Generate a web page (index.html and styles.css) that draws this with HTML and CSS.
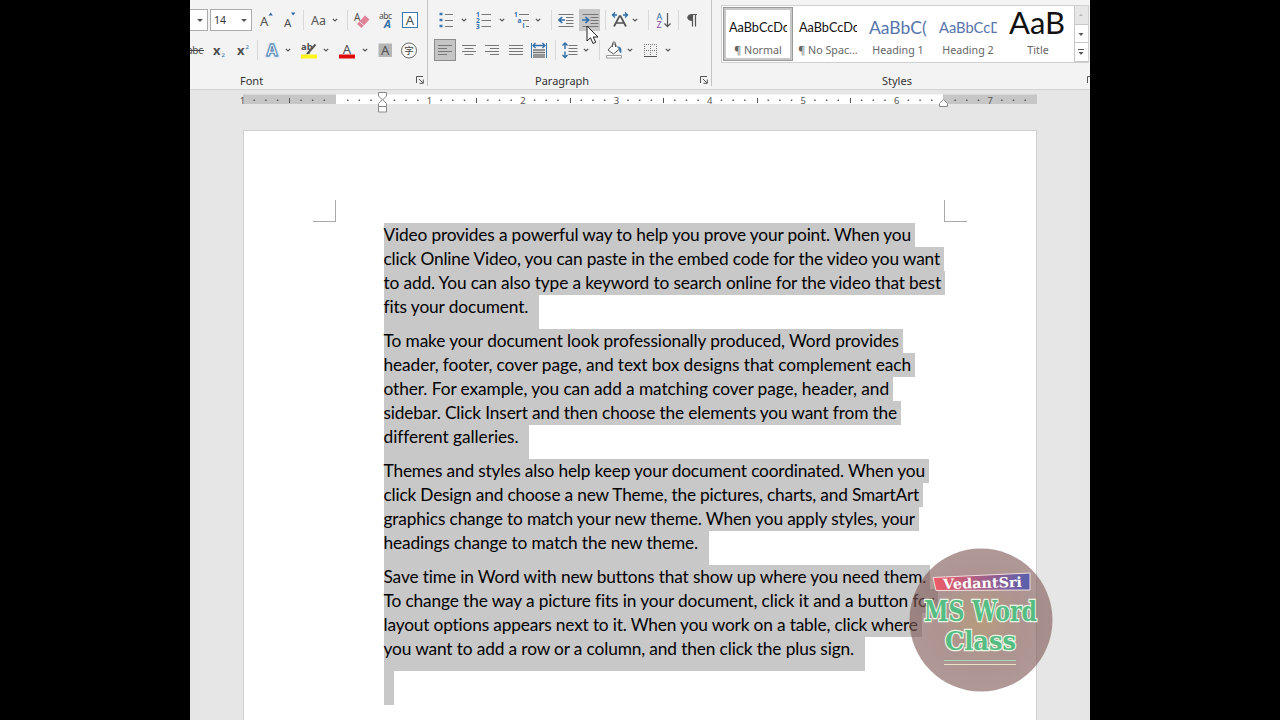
FILE: index.html
```
<!DOCTYPE html>
<html lang="en">
<head>
  <meta charset="UTF-8" />
  <meta name="viewport" content="width=device-width, initial-scale=1.0"/>
  <title>MS Word Class</title>
  <link rel="stylesheet" href="styles.css">
</head>
<body>

  <!-- shared symbols -->
  <svg class="defs">
    <symbol id="chev" viewBox="0 0 8 8"><path d="M1.8 2.8 4 5l2.200-2.200" fill="none" stroke="#555" stroke-width="1.200"/></symbol>
    <symbol id="launch" viewBox="0 0 8 8"><path d="M.5 7V.5H7M3 3l4 4M7.300 3.500v3.800H3.500" fill="none" stroke="#555"/></symbol>
  </svg>

  <div class="app">
    <div class="ribbon">

      <div class="group font-group">
        <div class="row font-row1">
          <div class="box"><i class="arrow"></i></div>
          <div class="box size">14<i class="arrow"></i></div>
          <svg class="icon" viewBox="0 0 24 24"><text x="4" y="18" class="glyph" font-size="13">A</text><path d="m12.500 7.500 2.200-3 2.200 3z" fill="#2f6da8"/></svg>
          <svg class="icon" viewBox="0 0 24 24"><text x="5" y="18.500" class="glyph" font-size="11.500">A</text><path d="m12 4.500 2.200 3 2.200-3z" fill="#2f6da8"/></svg>
          <i class="sep"></i>
          <span class="case">Aa</span>
          <svg class="chev"><use href="#chev"/></svg>
          <i class="sep"></i>
          <svg class="icon" viewBox="0 0 24 24"><text x="3" y="13" class="glyph" font-size="10">A</text><path d="m6 16 8-8.500 4.500 4-8 8.500z" fill="#e28299"/><path d="m8.500 13.500 4.500 4" stroke="#f3e3e8"/></svg>
          <svg class="icon" viewBox="0 0 24 24"><text x="5" y="10.500" class="glyph" font-size="8.500" textLength="13">abc</text><text x="10" y="20" font-size="11" font-weight="bold" font-style="italic" fill="#2f6da8">A</text></svg>
          <svg class="icon" viewBox="0 0 24 24"><rect x="4.500" y="4.500" width="15" height="15" fill="#fff" stroke="#3c78ad"/><text x="12" y="17" text-anchor="middle" class="glyph" font-size="13">A</text></svg>
        </div>
        <div class="row font-row2">
          <svg class="icon" viewBox="0 0 24 24"><text x="3" y="16" class="glyph" font-size="10" textLength="16">abc</text><path d="M2 12.500h18" stroke="#444"/></svg>
          <svg class="icon" viewBox="0 0 24 24"><text x="6" y="17" class="glyph" font-size="13" font-weight="bold">x</text><text x="14.500" y="18.500" font-size="6" fill="#2f6da8">2</text></svg>
          <svg class="icon" viewBox="0 0 24 24"><text x="6" y="17" class="glyph" font-size="13" font-weight="bold">x</text><text x="14.500" y="11" font-size="6" fill="#2f6da8">2</text></svg>
          <i class="sep"></i>
          <svg class="icon" viewBox="0 0 24 24"><text x="12" y="18" text-anchor="middle" font-size="16" font-weight="bold" fill="#fff" stroke="#c2d9ef" stroke-width="2.500">A</text><text x="12" y="18" text-anchor="middle" font-size="16" font-weight="bold" fill="#fff" stroke="#4478ab" stroke-width=".9">A</text></svg>
          <svg class="chev"><use href="#chev"/></svg>
          <svg class="icon" viewBox="0 0 24 24"><text x="4" y="12" class="glyph" font-size="9.500" font-weight="bold">ab</text><path d="M11 15 18.500 6.500" stroke="#555" stroke-width="2"/><path d="m8.500 16.500 3-3 1.500 2z" fill="#444"/><path d="M4 16.500h16v4H4z" fill="#fdf51c"/></svg>
          <svg class="chev"><use href="#chev"/></svg>
          <svg class="icon" viewBox="0 0 24 24"><text x="12" y="15.500" text-anchor="middle" class="glyph" font-size="13">A</text><path d="M4 16.500h16v4H4z" fill="#de0b0b"/></svg>
          <svg class="chev"><use href="#chev"/></svg>
          <svg class="icon" viewBox="0 0 24 24"><path d="M5.500 5.500h13.500v13.500H5.500z" fill="#b5b5b5"/><text x="12.200" y="17" text-anchor="middle" class="glyph" font-size="13">A</text></svg>
          <svg class="icon" viewBox="0 0 24 24"><circle cx="12" cy="12.500" r="7.500" fill="#fafafa" stroke="#666"/><text x="12" y="16" text-anchor="middle" class="cjk" font-size="9.500">字</text></svg>
        </div>
        <div class="label"><span class="font-label">Font</span><svg class="launch"><use href="#launch"/></svg></div>
      </div>

      <div class="group para-group">
        <div class="row para-row1">
          <svg class="icon" viewBox="0 0 24 24"><path d="M5.500 6h3M5.500 12h3M5.500 18h3" stroke="#3c78ad" stroke-width="2.600"/><path d="M11 6.500h8M11 12.500h8M11 18.500h8" stroke="#777"/></svg>
          <svg class="chev"><use href="#chev"/></svg>
          <svg class="icon" viewBox="0 0 24 24"><g font-size="6.500" font-weight="bold" fill="#2f6da8"><text x="4" y="8.500">1</text><text x="4" y="14.500">2</text><text x="4" y="20.500">3</text></g><path d="M9.500 6.500h9.500M9.500 12.500h9.500M9.500 18.500h9.500" stroke="#777"/></svg>
          <svg class="chev"><use href="#chev"/></svg>
          <svg class="icon" viewBox="0 0 24 24"><g font-size="6.500" font-weight="bold" fill="#2f6da8"><text x="4" y="8.500">1</text><text x="7.500" y="14.500">a</text><text x="12.500" y="20">i</text></g><path d="M9 6.500h10M13 12.500h6M16 18.500h3" stroke="#777"/></svg>
          <svg class="chev"><use href="#chev"/></svg>
          <i class="sep"></i>
          <svg class="icon" viewBox="0 0 24 24"><path d="M4.500 6.500h15M12 9.500h7.500M12 12.500h7.500M12 15.500h7.500M4.500 18.500h15" stroke="#777"/><path d="M11 12H5.500M8.200 9 5 12l3.200 3" fill="none" stroke="#2f6da8" stroke-width="1.700"/></svg>
          <svg class="icon hover" viewBox="0 0 24 24"><path d="M4.500 6.500h16M12.500 9.500h8M12.500 12.500h8M12.500 15.500h8M4.500 18.500h16" stroke="#777"/><path d="M4 12h6M7.500 9l3.200 3-3.200 3" fill="none" stroke="#2f6da8" stroke-width="1.700"/></svg>
          <i class="sep"></i>
          <svg class="icon" viewBox="0 0 24 24"><path d="M6 18.500 11.500 8h1l5.500 10.500M8 15h8" fill="none" stroke="#505050" stroke-width="1.700"/><path d="M9 7H5M7 4.500 4.500 7 7 9.500M15 7h4M17 4.500 19.500 7 17 9.500" fill="none" stroke="#2f6da8" stroke-width="1.300"/></svg>
          <svg class="chev"><use href="#chev"/></svg>
          <i class="sep"></i>
          <svg class="icon" viewBox="0 0 24 24"><text x="4.500" y="11.500" font-size="9" fill="#2f6da8">A</text><text x="4.500" y="20" font-size="9" fill="#8a4ba0">Z</text><path d="M15.500 5v13.500M12.500 15.500l3 3.200 3-3.200" fill="none" stroke="#555" stroke-width="1.200"/></svg>
          <i class="sep"></i>
          <svg class="icon" viewBox="0 0 24 24"><path d="M12.500 7v11.500M15.500 7v11.500M11 6.500h6" stroke="#555" stroke-width="1.200"/><path d="M12.500 6v7C5.500 13 5.500 6 12.500 6z" fill="#555"/></svg>
        </div>
        <div class="row para-row2">
          <svg class="icon active" viewBox="0 0 24 24"><path d="M5 7.500h14M5 10.500h9M5 13.500h14M5 16.500h9" stroke="#777"/></svg>
          <svg class="icon" viewBox="0 0 24 24"><path d="M5 7.500h14M7.500 10.500h9M5 13.500h14M7.500 16.500h9" stroke="#777"/></svg>
          <svg class="icon" viewBox="0 0 24 24"><path d="M5 7.500h14M10 10.500h9M5 13.500h14M10 16.500h9" stroke="#777"/></svg>
          <svg class="icon" viewBox="0 0 24 24"><path d="M5 7.500h14M5 10.500h14M5 13.500h14M5 16.500h14" stroke="#777"/></svg>
          <svg class="icon" viewBox="0 0 24 24"><path d="M4.500 5v15M19.500 5v15" stroke="#3c78ad"/><path d="M6 7.500h12M8.500 5 6 7.500 8.500 10M15.500 5 18 7.500 15.500 10" fill="none" stroke="#2f6da8" stroke-width="1.300"/><path d="M6 12h12M6 14.500h12M6 17h12M6 19h12" stroke="#777" stroke-width="1.300"/></svg>
          <i class="sep"></i>
          <svg class="icon" viewBox="0 0 24 24"><path d="M10.500 7.500h9M10.500 10.500h9M10.500 13.500h9M10.500 16.500h9" stroke="#777"/><path d="M7 5v6M4.500 7.500 7 5l2.500 2.500M7 13.500V19M4.500 17 7 19.500 9.500 17" fill="none" stroke="#2f6da8" stroke-width="1.400"/></svg>
          <svg class="chev"><use href="#chev"/></svg>
          <i class="sep"></i>
          <svg class="icon" viewBox="0 0 24 24"><path d="m6 12 6-6.500 5.500 5.500-6 5z" fill="#fff" stroke="#555"/><path d="M10.500 9V5.500c0-2 3-2 3 0V9" fill="none" stroke="#555"/><path d="M16 8.500c4 0 4 4 3 7-1.500-1-2-3-2-4.500z" fill="#3c78ad"/><path d="M4.500 17.500h15v2.500h-15z" fill="#fff" stroke="#999"/></svg>
          <svg class="chev"><use href="#chev"/></svg>
          <svg class="icon" viewBox="0 0 24 24"><path d="M6 6.500h12.500v12M6.500 6v12M12.500 6v12M6 12.500h12" fill="none" stroke="#777" stroke-dasharray="1 1"/><path d="M6 18.500h13" stroke="#555"/></svg>
          <svg class="chev"><use href="#chev"/></svg>
        </div>
        <div class="label"><span class="para-label">Paragraph</span><svg class="launch"><use href="#launch"/></svg></div>
      </div>

      <div class="group styles-group">
        <div class="gallery">
          <div class="style selected"><div class="sample">AaBbCcDc</div><div class="name">¶ Normal</div></div>
          <div class="style"><div class="sample">AaBbCcDc</div><div class="name">¶ No Spac...</div></div>
          <div class="style"><div class="sample h1">AaBbC(</div><div class="name">Heading 1</div></div>
          <div class="style"><div class="sample h2">AaBbCcD</div><div class="name">Heading 2</div></div>
          <div class="style"><div class="sample title">AaB</div><div class="name">Title</div></div>
          <div class="scroller">
            <span class="off"><svg viewBox="0 0 12 18"><path d="m4 10 2-2.500L8 10z" fill="#bbb"/></svg></span>
            <span><svg viewBox="0 0 12 18"><path d="m3.500 8 2.500 3 2.500-3z" fill="#555"/></svg></span>
            <span><svg viewBox="0 0 12 18"><path d="M3 6.500h6" stroke="#555"/><path d="m3.500 9 2.500 3 2.500-3z" fill="#555"/></svg></span>
          </div>
        </div>
        <div class="label"><span class="styles-label">Styles</span><svg class="launch"><use href="#launch"/></svg></div>
      </div>
    </div>

    <svg class="ruler" viewBox="190 90 900 40">
      <rect x="243" y="94.500" width="93" height="9.500" fill="#c6c6c6"/>
      <rect x="336" y="94.500" width="607" height="9.500" fill="#fff"/>
      <rect x="943" y="94.500" width="94" height="9.500" fill="#c6c6c6"/>
      <g id="ticks"></g>
      <g fill="#fff" stroke="#888">
        <path d="M378.500 92.500h8v3.500l-4 4-4-4z"/>
        <path d="m382.500 99.500 4 4v3h-8v-3z"/>
        <path d="M378.500 106.500h8v5.500h-8z"/>
        <path d="m943.500 99.500 4 4v3h-8v-3z"/>
      </g>
    </svg>

    <div class="page">
      <div class="marks"><i class="mark left"></i><i class="mark right"></i></div>
      <div class="text">
        <p>
          <span data-w="527.500">Video provides a powerful way to help you prove your point. When you</span>
          <span data-w="556.500">click Online Video, you can paste in the embed code for the video you want</span>
          <span data-w="557.500">to add. You can also type a keyword to search online for the video that best</span>
          <span data-w="144.500">fits your document.</span>
        </p>
        <p>
          <span data-w="515.500">To make your document look professionally produced, Word provides</span>
          <span data-w="527.500">header, footer, cover page, and text box designs that complement each</span>
          <span data-w="505.500">other. For example, you can add a matching cover page, header, and</span>
          <span data-w="513.500">sidebar. Click Insert and then choose the elements you want from the</span>
          <span data-w="134.500">different galleries.</span>
        </p>
        <p>
          <span data-w="541.500">Themes and styles also help keep your document coordinated. When you</span>
          <span data-w="535.500">click Design and choose a new Theme, the pictures, charts, and SmartArt</span>
          <span data-w="531.500">graphics change to match your new theme. When you apply styles, your</span>
          <span data-w="314.500">headings change to match the new theme.</span>
        </p>
        <p>
          <span data-w="542.500">Save time in Word with new buttons that show up where you need them.</span>
          <span data-w="549.500">To change the way a picture fits in your document, click it and a button for</span>
          <span data-w="534.500">layout options appears next to it. When you work on a table, click where</span>
          <span data-w="470.500">you want to add a row or a column, and then click the plus sign.</span>
        </p>
        <p><span></span></p>
      </div>
    </div>

    <svg class="watermark" viewBox="0 0 144 144">
      <defs>
        <radialGradient id="disc"><stop offset="0" stop-color="#966d42" stop-opacity=".68"/><stop offset=".6" stop-color="#805a56" stop-opacity=".65"/><stop offset="1" stop-color="#7f5956" stop-opacity=".62"/></radialGradient>
        <linearGradient id="banner"><stop offset="0" stop-color="#ef5b66"/><stop offset=".5" stop-color="#a65f88"/><stop offset="1" stop-color="#5560ae"/></linearGradient>
      </defs>
      <circle cx="72" cy="72" r="71.500" fill="url(#disc)"/>
      <path d="M24 29.500 121 25v17l-94 .5z" fill="url(#banner)" stroke="#f3dfe0"/>
      <text x="34" y="40" class="brand" font-size="14" textLength="79" lengthAdjust="spacingAndGlyphs" transform="rotate(-1.500 72 36)">VedantSri</text>
      <text x="15" y="73" class="course" font-size="27" textLength="113" lengthAdjust="spacingAndGlyphs">MS Word</text>
      <text x="36" y="101.500" class="course" font-size="26" textLength="71" lengthAdjust="spacingAndGlyphs">Class</text>
      <path d="M35 112.500h72" stroke="#a5d6b5"/><path d="M35 116.500h72" stroke="#eee0c4"/>
    </svg>

    <svg class="cursor" viewBox="0 0 13 20"><path d="M1 1v15l3.500-3.200L7 18.500l2.700-1.200-2.500-5.300H12z" fill="#fff" stroke="#222"/></svg>
  </div>

  <script>
    // ruler: eighth-inch marks, zero at the left margin
    const INCH = 93.45;
    const ZERO = 336;
    let ticks = '';
    for (let i = -8; i < 60; i++) {
      const x = ZERO + i * INCH / 8;
      if (i === 0 || i === 4 || i === 52) continue;
      if (i % 8 === 0) {
        ticks += `<text x="${x}" y="103.500" text-anchor="middle">${Math.abs(i / 8)}</text>`;
      } else if (i % 4 === 0) {
        ticks += `<rect x="${Math.round(x)}" y="98" width="1" height="5"/>`;
      } else {
        ticks += `<rect x="${x - 0.7}" y="99.500" width="1.400" height="1.500"/>`;
      }
    }
    document.getElementById('ticks').innerHTML = ticks;

    // justify every line to its measured width
    document.querySelectorAll('.text span[data-w]').forEach(line => {
      const range = document.createRange();
      range.selectNodeContents(line);
      const diff = line.dataset.w - range.getBoundingClientRect().width;
      line.style.letterSpacing = diff / line.textContent.length + 'px';
    });
  </script>

</body>
</html>
```
FILE: styles.css
```
* {
  box-sizing: border-box;
}

body {
  margin: 0;
  background: #000;
  font-family: "Noto Sans", "Open Sans", sans-serif;
  overflow: hidden;
}

.defs {
  display: none;
}

.app {
  position: relative;
  width: 900px;
  height: 720px;
  margin: 0 auto;
  background: #e6e6e6;
  overflow: hidden;
}

/* ribbon */
.ribbon {
  display: flex;
  height: 90px;
  background: #f3f3f3;
  border-bottom: 1px solid #d2d2d2;
}

.group {
  display: flex;
  flex-direction: column;
  height: 86px;
  padding-top: 5px;
}

.font-group {
  width: 238px;
}

.para-group {
  width: 284px;
}

.styles-group {
  width: 378px;
  padding-left: 9px;
}

.font-group,
.para-group {
  border-right: 1px solid #c4c4c4;
}

.row {
  display: flex;
  align-items: center;
  height: 30px;
}

.icon {
  width: 24px;
  height: 24px;
  flex: none;
  overflow: visible;
}

.glyph {
  fill: #505050;
}

.cjk {
  font-family: "Noto Sans CJK SC", sans-serif;
  fill: #444;
}

.chev {
  width: 8px;
  height: 8px;
  flex: none;
}

.sep {
  width: 1px;
  height: 20px;
  flex: none;
  background: #d8d8d8;
}

.hover {
  background: linear-gradient(#c8c8c8, #c8c8c8) center / 21px 22px no-repeat;
}

.active {
  background: linear-gradient(#c5c5c5, #c5c5c5) center / 20px 20px no-repeat, linear-gradient(#8c8c8c, #8c8c8c) center / 22px 22px no-repeat;
}

.box {
  display: flex;
  align-items: center;
  justify-content: flex-end;
  width: 18px;
  height: 22px;
  flex: none;
  padding-right: 4px;
  background: #fff;
  border: 1px solid #ababab;
  border-left: 0;
}

.box.size {
  width: 42px;
  margin-left: 2px;
  padding-left: 3px;
  justify-content: space-between;
  border-left: 1px solid #ababab;
  font-size: 10.500px;
  color: #333;
}

.arrow {
  border: 3px solid transparent;
  border-top-color: #555;
  border-bottom: 0;
}

.case {
  width: 18px;
  font-size: 12.500px;
  color: #555;
}

/* spacing of the tool rows */
.font-row1 .icon:nth-child(3) { margin-left: 4px; }
.font-row1 .icon:nth-child(4) { margin-left: -1px; }
.font-row1 .case { margin-left: 7px; }
.font-row1 .chev { margin-left: 2px; }
.font-row1 .sep:nth-child(8) { margin-left: 8px; }
.font-row1 .icon:nth-child(9) { margin-left: 3px; }
.font-row1 .icon:nth-child(10) { margin-left: -1px; }

.font-row2 .icon:nth-child(1) { margin-left: -6px; }
.font-row2 .icon:nth-child(2) { margin-left: -1px; }
.font-row2 .sep { margin-left: 2px; }
.font-row2 .icon:nth-child(5) { margin-left: 2px; }
.font-row2 .icon:nth-child(7) { margin-left: 5px; }
.font-row2 .chev:nth-child(8) { margin-left: 1px; }
.font-row2 .icon:nth-child(9) { margin-left: 5px; }
.font-row2 .chev:nth-child(10) { margin-left: 2px; }
.font-row2 .icon:nth-child(11) { margin-left: 4px; }

.para-row1 { padding-left: 5.500px; }
.para-row1 .chev:nth-child(2) { margin-left: 2px; }
.para-row1 .icon:nth-child(3) { margin-left: 4px; }
.para-row1 .chev:nth-child(4) { margin-left: 2px; }
.para-row1 .icon:nth-child(5) { margin-left: 4px; }
.para-row1 .sep:nth-child(7) { margin-left: 9px; }
.para-row1 .icon:nth-child(8) { margin-left: 2px; }
.para-row1 .sep:nth-child(10) { margin-left: 3px; }
.para-row1 .icon:nth-child(11) { margin-left: 2px; }
.para-row1 .chev:nth-child(12) { margin-left: -1px; }
.para-row1 .sep:nth-child(13) { margin-left: 9px; }
.para-row1 .icon:nth-child(14) { margin-left: 3px; }
.para-row1 .sep:nth-child(15) { margin-left: 2px; }
.para-row1 .icon:nth-child(16) { margin-left: 1px; }

.para-row2 { padding-left: 5px; }
.para-row2 .icon:nth-child(-n+5) { margin-right: -0.500px; }
.para-row2 .sep:nth-child(6) { margin-left: 4px; }
.para-row2 .icon:nth-child(7) { margin-left: 2px; }
.para-row2 .sep:nth-child(9) { margin-left: 9px; }
.para-row2 .icon:nth-child(10) { margin-left: 2px; }
.para-row2 .icon:nth-child(12) { margin-left: 4px; }
.para-row2 .chev:nth-child(13) { margin-left: 2px; }

.label {
  display: flex;
  align-items: center;
  height: 16px;
  margin-top: auto;
  margin-bottom: -2px;
  padding-right: 3px;
  font-size: 11px;
  color: #333;
}

.label .launch {
  width: 8px;
  height: 8px;
  margin-left: auto;
}

.font-label {
  margin-left: 50px;
}

.para-label {
  margin-left: 107px;
}

.styles-label {
  margin-left: 161px;
}

.styles-group .label {
  padding-right: 0;
  margin-right: -5px;
}

/* styles gallery */
.gallery {
  display: flex;
  width: 368px;
  height: 58px;
  padding: 1px 0 1px 1px;
  background: #fff;
  border: 1px solid #d0d0d0;
}

.style {
  width: 70px;
  height: 54px;
  padding: 4px 6px 0;
  text-align: center;
  font-size: 10.700px;
  color: #666;
  white-space: nowrap;
}

.style.selected {
  padding: 1px 3px 0;
  border: 3px solid #c8c8c8;
  outline: 1px solid #999;
  outline-offset: -1px;
}

.sample {
  height: 30px;
  line-height: 33px;
  overflow: hidden;
  text-align: left;
  font-family: Lato, sans-serif;
  font-size: 12.700px;
  color: #111;
}

.name {
  margin: 0 -5px;
  line-height: 18px;
}

.sample.h1 {
  font-size: 17.500px;
  color: #5675ab;
}

.sample.h2 {
  font-size: 14.700px;
  color: #5675ab;
}

.sample.title {
  margin-right: -4px;
  font-size: 31px;
  line-height: 23px;
}

.scroller {
  display: flex;
  flex-direction: column;
  width: 14px;
  height: 56px;
  margin: -1px 0 -1px auto;
}

.scroller span {
  display: flex;
  flex: 1;
  min-height: 0;
  border-left: 1px solid #c8c8c8;
  border-bottom: 1px solid #c8c8c8;
}

.scroller svg {
  width: 12px;
  height: 18px;
}

.scroller .off {
  background: #e6e6e6;
}

/* ruler */
.ruler {
  display: block;
  width: 900px;
  height: 40px;
}

.ruler text {
  font-size: 9.500px;
}

#ticks {
  fill: #555;
}

/* document */
.page {
  width: 794px;
  height: 600px;
  margin-left: 53px;
  padding: 70px 70px 0;
  background: #fff;
  border: 1px solid #cfcfcf;
}

.marks {
  display: flex;
  justify-content: space-between;
  height: 22px;
  margin: -1px -1px 0;
}

.mark {
  width: 23px;
  border-bottom: 1px solid #a8a8a8;
}

.mark.left {
  border-right: 1px solid #a8a8a8;
}

.mark.right {
  border-left: 1px solid #a8a8a8;
}

.text {
  margin: 1px -20px 0 69.500px;
  font-family: Lato, sans-serif;
  font-size: 17.300px;
  line-height: 24.500px;
  color: #000;
}

.text p {
  margin: 0;
}

.text span {
  display: block;
  width: fit-content;
  height: 24px;
  padding-right: 4px;
  background: #c8c8c8;
  white-space: nowrap;
}

.text span:last-child {
  height: 34px;
  min-width: 10.500px;
  padding-right: 10.500px;
}

/* overlays */
.watermark {
  position: absolute;
  left: 719px;
  top: 548px;
  width: 144px;
  height: 144px;
}

.brand {
  font-family: "DejaVu Serif", serif;
  font-weight: bold;
  fill: #fff;
}

.course {
  font-family: "DejaVu Serif", serif;
  font-weight: bold;
  fill: #55bd83;
  stroke: #e9f5e4;
  stroke-width: 2.500px;
  paint-order: stroke;
}

.cursor {
  position: absolute;
  left: 396px;
  top: 25px;
  width: 13px;
  height: 20px;
}
```
